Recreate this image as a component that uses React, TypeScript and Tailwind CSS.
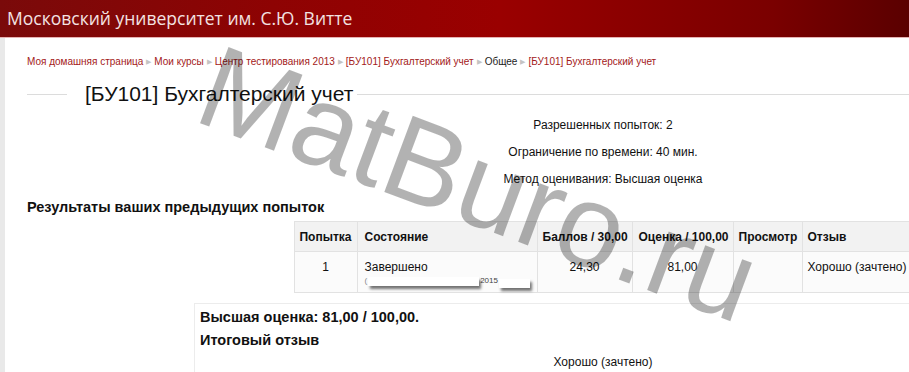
import React from "react";

const Sep = () => (
  <span className="mx-[3px] inline-block text-[7px] leading-[14px] text-[#c4c4c4] align-top">▶</span>
);

export default function App() {
  const crumbs = [
    "Моя домашняя страница",
    "Мои курсы",
    "Центр тестирования 2013",
    "[БУ101] Бухгалтерский учет",
  ];
  return (
    <div className="relative w-[909px] h-[372px] overflow-hidden bg-white font-['Liberation_Sans',Arial,sans-serif] text-[#111]">
      <header className="h-[38px] border-b border-[#e6b3b3] bg-[linear-gradient(90deg,#7a0a0a_0%,#8e0303_30%,#9a0000_55%,#7a0000_85%,#5a0000_100%)] flex items-center px-[7px]">
        <span className="font-['Open_Sans',sans-serif] text-[17.5px] leading-none text-[#f3e2e2]">
          Московский университет им. С.Ю. Витте
        </span>
      </header>
      <div className="flex h-[334px]">
        <div className="w-[5px] bg-[#e9e9e9] shrink-0" />
        <main className="w-[1152px] shrink-0 ml-[22px] flex flex-col">
          <nav className="pt-[17px] text-[10px] leading-[14px] whitespace-nowrap">
            {crumbs.map((c) => (
              <React.Fragment key={c}>
                <span className="text-[#a32020]">{c}</span>
                <Sep />
              </React.Fragment>
            ))}
            <span className="text-[#222]">Общее</span>
            <Sep />
            <span className="text-[#a32020]">[БУ101] Бухгалтерский учет</span>
          </nav>
          <div className="mt-[11px] h-[28px] flex items-center">
            <div className="w-[40px] h-px bg-[#dcdcdc]" />
            <h2 className="ml-[18px] mr-[4px] text-[21px] leading-[28px] text-[#111] whitespace-nowrap">
              [БУ101] Бухгалтерский учет
            </h2>
            <div className="flex-1 h-px bg-[#dcdcdc]" />
          </div>
          <div className="mt-[9px] flex flex-col gap-[11px] items-center text-[12px] leading-[16px] text-[#111]">
            <p>Разрешенных попыток: 2</p>
            <p>Ограничение по времени: 40 мин.</p>
            <p>Метод оценивания: Высшая оценка</p>
          </div>
          <h3 className="mt-[11px] text-[14.5px] leading-[18px] font-bold text-[#111]">
            Результаты ваших предыдущих попыток
          </h3>
          <div className="mt-[5px] flex justify-center">
            <table className="w-[618px] table-fixed border-collapse text-[12px] leading-[16px] text-[#111]">
              <colgroup>
                <col className="w-[63px]" />
                <col className="w-[180px]" />
                <col className="w-[95px]" />
                <col className="w-[101px]" />
                <col className="w-[69px]" />
                <col className="w-[110px]" />
              </colgroup>
              <thead>
                <tr className="h-[30px] bg-[#f2f2f2]">
                  <th className="border border-[#e2e2e2] px-0 text-center font-bold">Попытка</th>
                  <th className="border border-[#e2e2e2] px-[7px] text-left font-bold">Состояние</th>
                  <th className="border border-[#e2e2e2] px-[5px] text-left font-bold whitespace-nowrap">Баллов / 30,00</th>
                  <th className="border border-[#e2e2e2] px-[6px] text-left font-bold whitespace-nowrap">Оценка / 100,00</th>
                  <th className="border border-[#e2e2e2] px-[5px] text-left font-bold">Просмотр</th>
                  <th className="border border-[#e2e2e2] px-[5px] text-left font-bold">Отзыв</th>
                </tr>
              </thead>
              <tbody>
                <tr className="h-[41px] bg-[#fbfbfb] align-top">
                  <td className="border border-[#e2e2e2] pt-[7px] text-center">1</td>
                  <td className="border border-[#e2e2e2] pt-[7px] px-[7px] overflow-visible">
                    <div>Завершено</div>
                    <div className="flex items-center h-[12px] whitespace-nowrap">
                      <span className="text-[8px] leading-none text-[#888]">(</span>
                      <span className="ml-[1px] w-[120px] h-[9px] bg-white shadow-[2px_3px_3px_rgba(0,0,0,0.55)]" />
                      <span className="ml-[1px] text-[8px] leading-none text-[#444]">2015</span>
                      <span className="ml-[1px] mt-[4px] w-[33px] h-[9px] bg-white shadow-[2px_3px_3px_rgba(0,0,0,0.55)] relative z-10" />
                    </div>
                  </td>
                  <td className="border border-[#e2e2e2] pt-[7px] text-center">24,30</td>
                  <td className="border border-[#e2e2e2] pt-[7px] text-center">81,00</td>
                  <td className="border border-[#e2e2e2] pt-[7px]"></td>
                  <td className="border border-[#e2e2e2] pt-[7px] px-[5px] whitespace-nowrap">Хорошо (зачтено)</td>
                </tr>
              </tbody>
            </table>
          </div>
          <div className="mt-[10px] ml-[167px] w-[818px] border border-[#ececec] pt-[4px] px-[5px] pb-[10px]">
            <p className="text-[14.5px] leading-[18px] font-bold">Высшая оценка: 81,00 / 100,00.</p>
            <p className="mt-[5px] text-[14.5px] leading-[18px] font-bold">Итоговый отзыв</p>
            <p className="mt-[5px] text-center text-[12px] leading-[16px]">Хорошо (зачтено)</p>
          </div>
        </main>
      </div>
      <div className="pointer-events-none absolute left-[226px] top-[26px] origin-top-left rotate-[20.5deg] font-['Liberation_Sans',Arial,sans-serif] text-[118px] leading-none text-black/30 whitespace-nowrap">
        MatBuro.ru
      </div>
    </div>
  );
}
